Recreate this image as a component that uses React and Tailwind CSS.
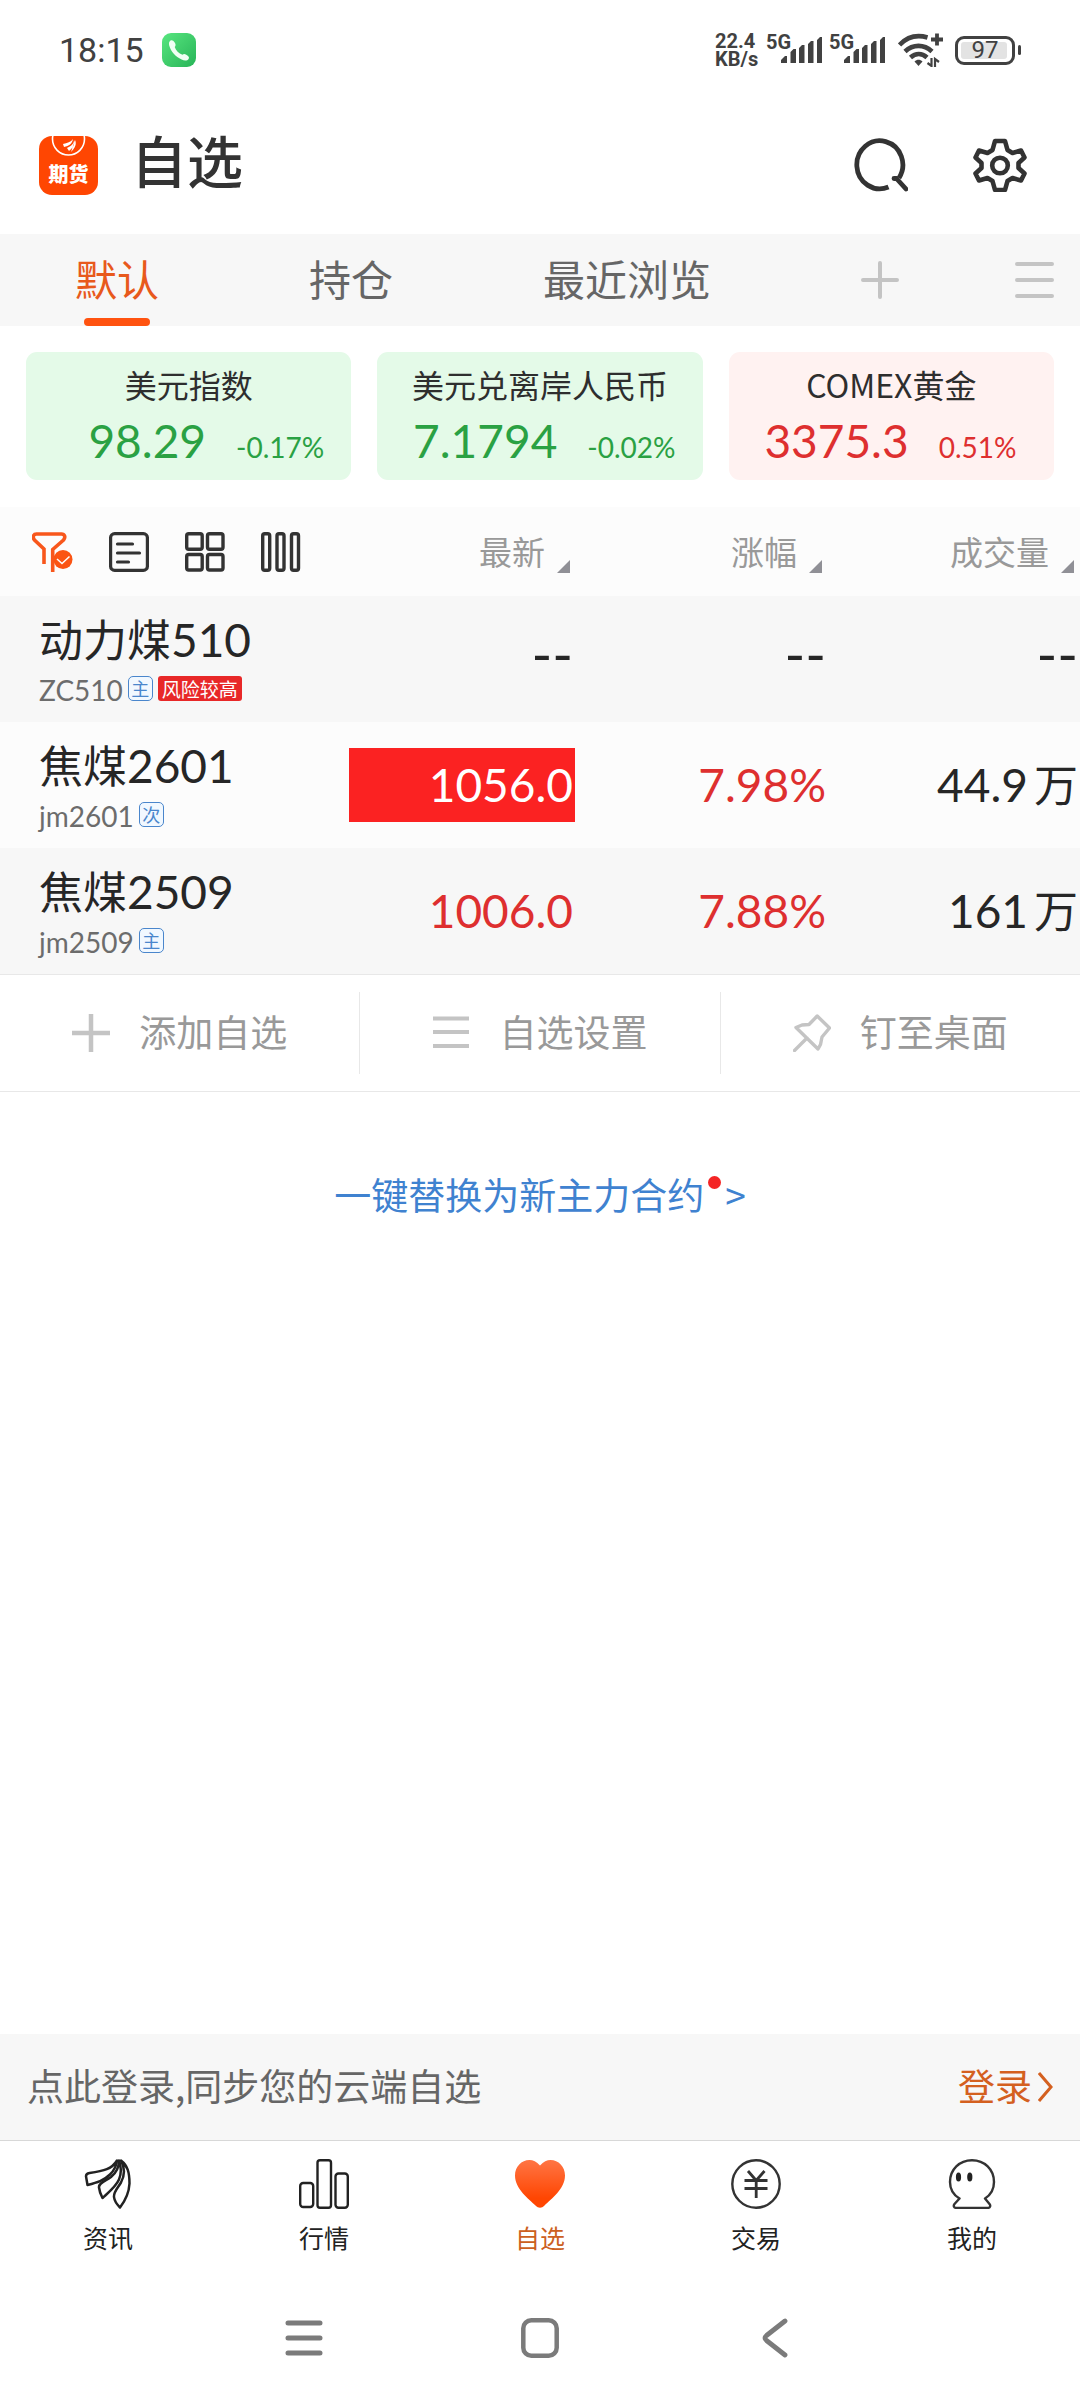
import React from "react";

const tabs = [
  { id: "default", label: "默认", active: true },
  { id: "position", label: "持仓" },
  { id: "recent", label: "最近浏览" },
];

const indexes = [
  { name: "美元指数", value: "98.29", change: "-0.17%", up: false },
  { name: "美元兑离岸人民币", value: "7.1794", change: "-0.02%", up: false },
  { name: "COMEX黄金", value: "3375.3", change: "0.51%", up: true },
];

const columns = ["最新", "涨幅", "成交量"];

const quotes = [
  { name: "动力煤", month: "510", code: "ZC510", badge: "主", risk: "风险较高", last: "--", change: "--", volume: "--", empty: true },
  { name: "焦煤", month: "2601", code: "jm2601", badge: "次", last: "1056.0", change: "7.98%", volume: "44.9", unit: "万", flash: true },
  { name: "焦煤", month: "2509", code: "jm2509", badge: "主", last: "1006.0", change: "7.88%", volume: "161", unit: "万" },
];

function SignalIcon() {
  return (
    <svg className="h-[26px] w-[41px]" viewBox="0 0 41 26" fill="#414141">
      <path d="M0 26v-3l4-4h2v7zM9.500 26V15l3-3H15v14zM18 26V11l3-3h2.500v18zM27 26V7l3-3h2.500v22zM36 26V3l3-3h2v26z" />
    </svg>
  );
}

function WifiIcon() {
  return (
    <svg className="h-[34px] w-[46px]" viewBox="0 0 46 34" fill="none" stroke="#414141" strokeWidth="4.600">
      <path d="M1.500 12C9 4 19 1.500 29.500 4.500" />
      <path d="M7 18.500C15 11 26 11 34 18.500" />
      <path d="M12.500 24.500C17.500 20 24 20 29 24.500" />
      <path d="M16.500 28.500c2.500-2.500 5.500-2.500 8 0l-4 4.500z" fill="#414141" stroke="none" />
      <path d="M39 .5v12M33 6.500h12" strokeWidth="3.800" />
      <path d="M33.500 25v8l-4-3M37 34v-8l4 3" strokeWidth="2.200" />
    </svg>
  );
}

function BatteryIcon() {
  return (
    <div className="flex items-center gap-[3px]">
      <div className="flex h-[29px] w-[60px] items-center rounded-[9px] border-[3px] border-[#414141] p-[3px]">
        <div className="flex h-full w-[46px] items-center justify-center rounded-[3px] bg-[#e3e3e3] text-[24px] leading-none">
          <span className="pl-[2px]">97</span>
        </div>
      </div>
      <div className="h-[10px] w-[3px] rounded-full bg-[#414141]" />
    </div>
  );
}

function PhoneIcon() {
  return (
    <svg className="h-[34px] w-[34px]" viewBox="0 0 34 34">
      <defs>
        <linearGradient id="call" x1="0" y1="0" x2="1" y2="1">
          <stop offset="0" stopColor="#58e67f" />
          <stop offset="1" stopColor="#28b458" />
        </linearGradient>
      </defs>
      <rect width="34" height="34" rx="9" fill="url(#call)" />
      <path d="M8.500 7.500c1.500-1 3.500.5 4.500 2.500 1 1.800.6 3-.3 4 1.200 3.500 4 6.300 7.800 7.800 1-1 2.300-1 3.800 0 2.200 1.200 3.400 2.800 2.300 4.200-1.500 2-4.300 2-7 .5C13.500 23.500 9 19 7.200 12.500 6.700 10.300 7 8.500 8.500 7.500z" fill="#f0fff4" />
    </svg>
  );
}

function AppLogo() {
  return (
    <div className="relative h-[59px] w-[59px] overflow-hidden rounded-[13px] bg-[#ff4602]">
      <svg className="absolute inset-0" viewBox="0 0 59 59" fill="none">
        <circle cx="29.500" cy="3" r="16" stroke="#fff" strokeWidth="1.600" />
        <path d="M34 3c-2 3-6 4-10 5l1 3c5-1 8-3 9-8zM35 4c0 4-3 6-7 8l2 3c4-3 6-7 5-11zM36 4c2 4 0 8-4 12" fill="#fff" />
      </svg>
      <span className="absolute inset-x-0 top-[27px] text-center text-[20px] leading-[22px] font-black text-white">期货</span>
    </div>
  );
}

function SearchIcon() {
  return (
    <svg className="h-[54px] w-[54px]" viewBox="0 0 54 54" fill="none" stroke="#333" strokeWidth="4.800">
      <path d="M34.500 49A23 24 0 1 1 45 40" />
      <path d="M40 40.500h2.500L52 51" strokeLinecap="round" strokeLinejoin="round" />
    </svg>
  );
}

function GearIcon() {
  return (
    <svg className="h-[54px] w-[54px]" viewBox="0 0 54 54" fill="none" stroke="#333" strokeWidth="4.600" strokeLinejoin="round">
      <path d="M22 3h10l2.500 9 5 3 8.500-2.500 3.500 7-6 5.500v5l6 5.500-3.500 7-8.500-2.500-5 3-2.500 9H22l-2.500-9-5-3L6 42.500l-3.500-7 6-5.500v-5l-6-5.500L6 12.500l8.500 2.500 5-3z" />
      <circle cx="27" cy="27.500" r="7.800" />
    </svg>
  );
}

function PlusIcon() {
  return (
    <svg className="h-[38px] w-[38px]" viewBox="0 0 38 38" stroke="#c4c4c4" strokeWidth="4" strokeLinecap="round">
      <path d="M19 2v34M2 19h34" />
    </svg>
  );
}

function MenuIcon() {
  return (
    <svg className="h-[38px] w-[39px]" viewBox="0 0 39 38" stroke="#c4c4c4" strokeWidth="4" strokeLinecap="round">
      <path d="M2 3h35M2 19h35M2 35h35" />
    </svg>
  );
}

function AddIcon() {
  return (
    <svg className="h-[38px] w-[38px]" viewBox="0 0 38 38" stroke="#c4c4c4" strokeWidth="4.500">
      <path d="M19 0v38M0 19h38" />
    </svg>
  );
}

function ListIcon() {
  return (
    <svg className="h-[38px] w-[38px]" viewBox="0 0 38 38" stroke="#c4c4c4" strokeWidth="4">
      <path d="M1 4.500h36M1 18h36M1 32h36" />
    </svg>
  );
}

function PinIcon() {
  return (
    <svg className="h-[38px] w-[38px]" viewBox="0 0 38 38" fill="none" stroke="#c4c4c4" strokeWidth="3.400" strokeLinejoin="round" strokeLinecap="round">
      <path d="M1.500 36.500 14 24M24.200 2 36.500 14l-7.500 9-1.500 7.500L25 35 3 13.500l6-2.500 7-.5z" />
    </svg>
  );
}

function FunnelIcon() {
  return (
    <svg className="h-[40px] w-[41px]" viewBox="0 0 41 40" fill="none" stroke="#f8571c" strokeWidth="3.600">
      <path d="M12 32V17L2.500 8C0 5 1.500 2 4.500 2h25C32.500 2 34 5 31.500 8L20.700 17.500V40" />
      <circle cx="31" cy="27.500" r="9.500" fill="#fb5413" stroke="none" />
      <path d="m25 27 5 4.500 7.500-7" stroke="#fff" strokeWidth="1.500" />
    </svg>
  );
}

function NewsViewIcon() {
  return (
    <svg className="h-[40px] w-[40px]" viewBox="0 0 40 40" fill="none" stroke="#333" strokeWidth="3.200">
      <rect x="1.600" y="1.600" width="36.800" height="36.800" rx="4" />
      <path d="M8.500 12h15M8.500 21h22M8.500 30h11" strokeLinecap="round" />
    </svg>
  );
}

function GridViewIcon() {
  return (
    <svg className="h-[40px] w-[40px]" viewBox="0 0 40 40" fill="none" stroke="#333" strokeWidth="3.400">
      <rect x="1.700" y="1.700" width="15.500" height="15.500" rx="2" />
      <rect x="22.500" y="1.700" width="15.500" height="15.500" rx="2" />
      <rect x="1.700" y="22.500" width="15.500" height="15.500" rx="2" />
      <rect x="22.500" y="22.500" width="15.500" height="15.500" rx="2" />
    </svg>
  );
}

function ColumnViewIcon() {
  return (
    <svg className="h-[40px] w-[40px]" viewBox="0 0 40 40" fill="none" stroke="#333" strokeWidth="3.400">
      <rect x="1.700" y="1.700" width="7" height="36.600" rx="2" />
      <rect x="16" y="1.700" width="7" height="36.600" rx="2" />
      <rect x="30.500" y="1.700" width="7" height="36.600" rx="2" />
    </svg>
  );
}

function NewsIcon() {
  return (
    <svg className="h-[50px] w-[50px]" viewBox="0 0 50 50" fill="none" stroke="#222" strokeWidth="2.500" strokeLinejoin="round">
      <path d="M34 1.500C29 10 21 12 6.500 14c-2.500.4-3.500 1.200-3.500 3.200L4.500 26C14 23.500 21 21.500 27 15.500 31 11.500 33.500 7 34 1.500z" />
      <path d="M36 1.500C36 9 33 14 28 18 22.500 22 15.500 24 16 28.500c.4 4 2 7.500 3.500 10.500C26 33 33 27.500 36 20.500 38.500 14.500 38 7 36 1.500z" />
      <path d="M38 1.500c4 7.500 3.500 15.500 0 22-3.500 6-7.500 9-7 14.500.5 4.500 3 7.500 6 10.500 5-6.500 9-14.500 9.500-24C46.500 13 44.500 6.500 38 1.500z" />
    </svg>
  );
}

function MarketIcon() {
  return (
    <svg className="h-[50px] w-[50px]" viewBox="0 0 50 50" fill="none" stroke="#222" strokeWidth="2.400">
      <rect x="1.200" y="24" width="13" height="24" rx="3" />
      <rect x="18.500" y="1.200" width="13.500" height="47.600" rx="2.500" />
      <rect x="36.500" y="14.500" width="12.300" height="34.300" rx="3" />
    </svg>
  );
}

function HeartIcon() {
  return (
    <svg className="h-[50px] w-[50px]" viewBox="0 0 50 50">
      <defs>
        <linearGradient id="heart" x1="0" y1="0" x2="0" y2="1">
          <stop offset="0.050" stopColor="#ff7240" />
          <stop offset="0.800" stopColor="#ff4602" />
        </linearGradient>
      </defs>
      <path d="M25 6.500C21.500 2.500 18 1 14.500 1 6.500 1 0 7.500 0 16.500 0 30 14 40 20.500 46.500c3 3 6 3 9 0C36 40 50 30 50 16.500 50 7.500 43.500 1 35.500 1 32 1 28.500 2.500 25 6.500z" fill="url(#heart)" />
    </svg>
  );
}

function TradeIcon() {
  return (
    <svg className="h-[50px] w-[50px]" viewBox="0 0 50 50" fill="none" stroke="#333" strokeWidth="2.400">
      <circle cx="25" cy="25" r="23.700" />
      <path d="m17 12 8.200 9.500L33.500 12M13.500 21.500h23M13.500 29.500h23M25.200 21.500V39" strokeWidth="2.800" />
    </svg>
  );
}

function MineIcon() {
  return (
    <svg className="h-[50px] w-[50px]" viewBox="0 0 50 50" fill="none" stroke="#333" strokeWidth="2.400" strokeLinejoin="round">
      <path d="M12.500 39.500C6.500 36 3 29.500 3 23 3 10.500 12.500 1.200 25 1.200S47 10.500 47 23c0 6.500-3.500 13-9 16.500l4.500 5.500c1.500 2 .5 3.900-2 3.900h-31c-2.500 0-3.500-1.900-2-3.900z" />
      <ellipse cx="11.500" cy="18" rx="2.600" ry="4.500" fill="#222" stroke="none" />
      <ellipse cx="22.800" cy="18" rx="2.600" ry="4.500" fill="#222" stroke="none" />
    </svg>
  );
}

const views = [
  { label: "筛选", Icon: FunnelIcon },
  { label: "列表", Icon: NewsViewIcon },
  { label: "宫格", Icon: GridViewIcon },
  { label: "分列", Icon: ColumnViewIcon },
];

const actions = [
  { label: "添加自选", Icon: AddIcon },
  { label: "自选设置", Icon: ListIcon },
  { label: "钉至桌面", Icon: PinIcon },
];

const navigation = [
  { label: "资讯", Icon: NewsIcon },
  { label: "行情", Icon: MarketIcon },
  { label: "自选", Icon: HeartIcon, active: true },
  { label: "交易", Icon: TradeIcon },
  { label: "我的", Icon: MineIcon },
];

function StatusBar() {
  return (
    <div className="flex h-[100px] items-center justify-between px-[59px] text-[#414141]">
      <div className="flex items-center gap-[18px]">
        <span className="font-[Roboto,sans-serif] text-[34px] leading-none">18:15</span>
        <PhoneIcon />
      </div>
      <div className="flex items-center font-[Roboto,sans-serif]">
        <p className="w-[51px] text-[20px] leading-[18px] font-bold">22.4 KB/s</p>
        {["sim1", "sim2"].map((sim) => (
          <div key={sim} className="relative flex w-[63px] justify-end pr-[7px]">
            <span className="absolute -top-[4px] left-0 text-[20px] leading-[18px] font-bold">5G</span>
            <SignalIcon />
          </div>
        ))}
        <div className="mr-[11px] ml-[6px]">
          <WifiIcon />
        </div>
        <BatteryIcon />
      </div>
    </div>
  );
}

function TitleBar() {
  return (
    <header className="flex h-[134px] items-center pr-[53px] pb-[4px] pl-[39px]">
      <AppLogo />
      <h1 className="pb-[12px] pl-[33px] text-[56px] leading-[64px] font-medium text-[#333]">自选</h1>
      <div className="ml-auto flex gap-[65px]">
        <button type="button" aria-label="搜索">
          <SearchIcon />
        </button>
        <button type="button" aria-label="设置">
          <GearIcon />
        </button>
      </div>
    </header>
  );
}

function TabBar() {
  return (
    <nav className="flex h-[92px] items-center bg-[#f7f7f7] pr-[26px]">
      {tabs.map((tab) => (
        <button
          key={tab.id}
          type="button"
          className={`relative h-full px-[75px] pb-[4px] text-[42px] leading-none ${tab.active ? "text-[#e8591c]" : "text-[#666]"}`}
        >
          {tab.label}
          {tab.active ? <span className="absolute bottom-0 left-1/2 h-[8px] w-[66px] -translate-x-1/2 rounded-full bg-[#ff5310]" /> : null}
        </button>
      ))}
      <div className="ml-auto flex gap-[116px]">
        <button type="button" aria-label="新增分组">
          <PlusIcon />
        </button>
        <button type="button" aria-label="管理分组">
          <MenuIcon />
        </button>
      </div>
    </nav>
  );
}

function IndexCard({ item }) {
  return (
    <a
      href="#index"
      className={`block h-[128px] flex-1 rounded-[11px] pt-[12px] ${item.up ? "bg-[#fff2f1] text-[#de2f2f]" : "bg-[#e4fae8] text-[#2aa143]"}`}
    >
      <div className="text-center text-[32px] leading-[40px] text-[#2e2e2e]">{item.name}</div>
      <div className="flex items-baseline gap-[30px] font-[Lato,sans-serif]">
        <span className="w-[180px] text-right text-[46px] leading-[74px]">{item.value}</span>
        <span className="text-[28px]">{item.change}</span>
      </div>
    </a>
  );
}

function QuoteTable() {
  return (
    <table className="w-full table-fixed border-b border-[#e8e8e8]">
      <thead>
        <tr className="h-[89px] bg-[#fcfcfc]">
          <th className="w-[30%] font-normal">
            <div className="flex gap-[36px] pl-[32px]">
              {views.map(({ label, Icon }) => (
                <button key={label} type="button" aria-label={label}>
                  <Icon />
                </button>
              ))}
            </div>
          </th>
          {columns.map((column) => (
            <th key={column} className="font-normal">
              <button type="button" className="ml-auto flex items-end gap-[12px] pr-[6px] text-[33px] leading-[40px] text-[#999]">
                <span className="pb-[2px]">{column}</span>
                <svg className="h-[13px] w-[13px]" viewBox="0 0 13 13" fill="#909096">
                  <path d="M13 0v13H0z" />
                </svg>
              </button>
            </th>
          ))}
        </tr>
      </thead>
      <tbody>
        {quotes.map((quote) => {
          const color = quote.empty ? "text-[#262626]" : "text-[#de2f2f]";
          const size = quote.empty ? "pb-[10px] text-[56px]" : "text-[46px]";
          return (
            <tr key={quote.code} className="h-[126px] odd:bg-[#f7f7f7] even:bg-[#fcfcfc]">
              <td className="pl-[39px] align-top whitespace-nowrap">
                <div className="pt-[12px] text-[44px] leading-[60px] text-[#262626]">
                  {quote.name}
                  <span className="font-[Lato,sans-serif] text-[46px]">{quote.month}</span>
                </div>
                <div className="flex items-center gap-[5px]">
                  <span className="font-[Lato,sans-serif] text-[28px] leading-[40px] text-[#6c6c6c]">{quote.code}</span>
                  <span className="mb-[4px] flex h-[25px] w-[25px] items-center justify-center rounded-[5px] border border-[#4a86cc] bg-[#f1f8ff] text-[18px] leading-none text-[#4a86cc]">
                    {quote.badge}
                  </span>
                  {quote.risk ? (
                    <span className="mb-[4px] flex h-[25px] items-center rounded-[3px] bg-[#e82828] px-[4px] text-[19px] leading-none text-white">{quote.risk}</span>
                  ) : null}
                </div>
              </td>
              <td className={`pr-[1px] text-right font-[Lato,sans-serif] leading-[74px] ${size}`}>
                <div className={`ml-auto w-[226px] pr-[2px] ${quote.flash ? "bg-[#fb2222] text-white" : color}`}>{quote.last}</div>
              </td>
              <td className={`pr-[2px] text-right font-[Lato,sans-serif] leading-[74px] ${size} ${color}`}>{quote.change}</td>
              <td className={`pr-[2px] text-right font-[Lato,sans-serif] leading-[74px] text-[#262626] ${size}`}>
                {quote.volume}
                {quote.unit ? <span className="pl-[6px] font-['Noto_Sans_CJK_SC',sans-serif] text-[44px] leading-none">{quote.unit}</span> : null}
              </td>
            </tr>
          );
        })}
      </tbody>
    </table>
  );
}

export default function App() {
  return (
    <div className="flex min-h-screen flex-col overflow-x-hidden bg-white font-['Noto_Sans_CJK_SC',sans-serif]">
      <StatusBar />
      <TitleBar />
      <TabBar />

      <section className="flex gap-[26px] px-[26px] pt-[26px] pb-[27px]">
        {indexes.map((item) => (
          <IndexCard key={item.name} item={item} />
        ))}
      </section>

      <QuoteTable />

      <div className="flex h-[117px] items-center divide-x divide-[#e8e8e8] border-b border-[#e8e8e8]">
        {actions.map(({ label, Icon }) => (
          <button key={label} type="button" className="flex h-[82px] flex-1 items-center justify-center gap-[29px] text-[37px] leading-none text-[#999]">
            <Icon />
            <span className="pb-[2px]">{label}</span>
          </button>
        ))}
      </div>

      <a href="#replace" className="mx-auto mt-[78px] flex text-[37px] leading-[48px] text-[#3f82d0]">
        一键替换为新主力合约
        <span className="mt-[6px] mr-[4px] ml-[4px] h-[13px] w-[13px] rounded-full bg-[#f42525]" />
        <span>&gt;</span>
      </a>

      <div className="mt-auto flex h-[106px] items-center justify-between bg-[#f7f7f7] px-[27px] text-[37px] leading-none text-[#666]">
        <span className="pb-[4px]">点此登录,同步您的云端自选</span>
        <a href="#login" className="flex items-center gap-[6px] text-[#d4601f]">
          <span className="pb-[4px]">登录</span>
          <svg className="h-[30px] w-[15px]" viewBox="0 0 15 30" fill="none" stroke="currentColor" strokeWidth="3">
            <path d="m1 1 12 14L1 29" />
          </svg>
        </a>
      </div>

      <nav className="flex h-[136px] border-t border-[#d8d8d8] pt-[18px]">
        {navigation.map(({ label, Icon, active }) => (
          <a key={label} href="#nav" className={`flex flex-1 flex-col items-center gap-[12px] text-[25px] leading-[32px] ${active ? "text-[#cc5f22]" : "text-[#222]"}`}>
            <Icon />
            {label}
          </a>
        ))}
      </nav>

      <div className="flex h-[124px] items-center justify-center gap-[198px]">
        <button type="button" aria-label="最近任务">
          <svg className="h-[40px] w-[38px]" viewBox="0 0 38 40" stroke="#7b7b7b" strokeWidth="5" strokeLinecap="round">
            <path d="M3 5h32M3 20h32M3 35h32" />
          </svg>
        </button>
        <button type="button" aria-label="主屏幕">
          <svg className="h-[40px] w-[38px]" viewBox="0 0 38 40" fill="none" stroke="#7b7b7b" strokeWidth="4.500">
            <rect x="2.300" y="2.300" width="33.400" height="35.400" rx="8" />
          </svg>
        </button>
        <button type="button" aria-label="返回">
          <svg className="h-[40px] w-[38px]" viewBox="0 0 38 40" fill="none" stroke="#7b7b7b" strokeWidth="4.800" strokeLinecap="round" strokeLinejoin="round">
            <path d="M28 3 9.500 17.500q-3 2.500 0 5L28 37" />
          </svg>
        </button>
      </div>
    </div>
  );
}
